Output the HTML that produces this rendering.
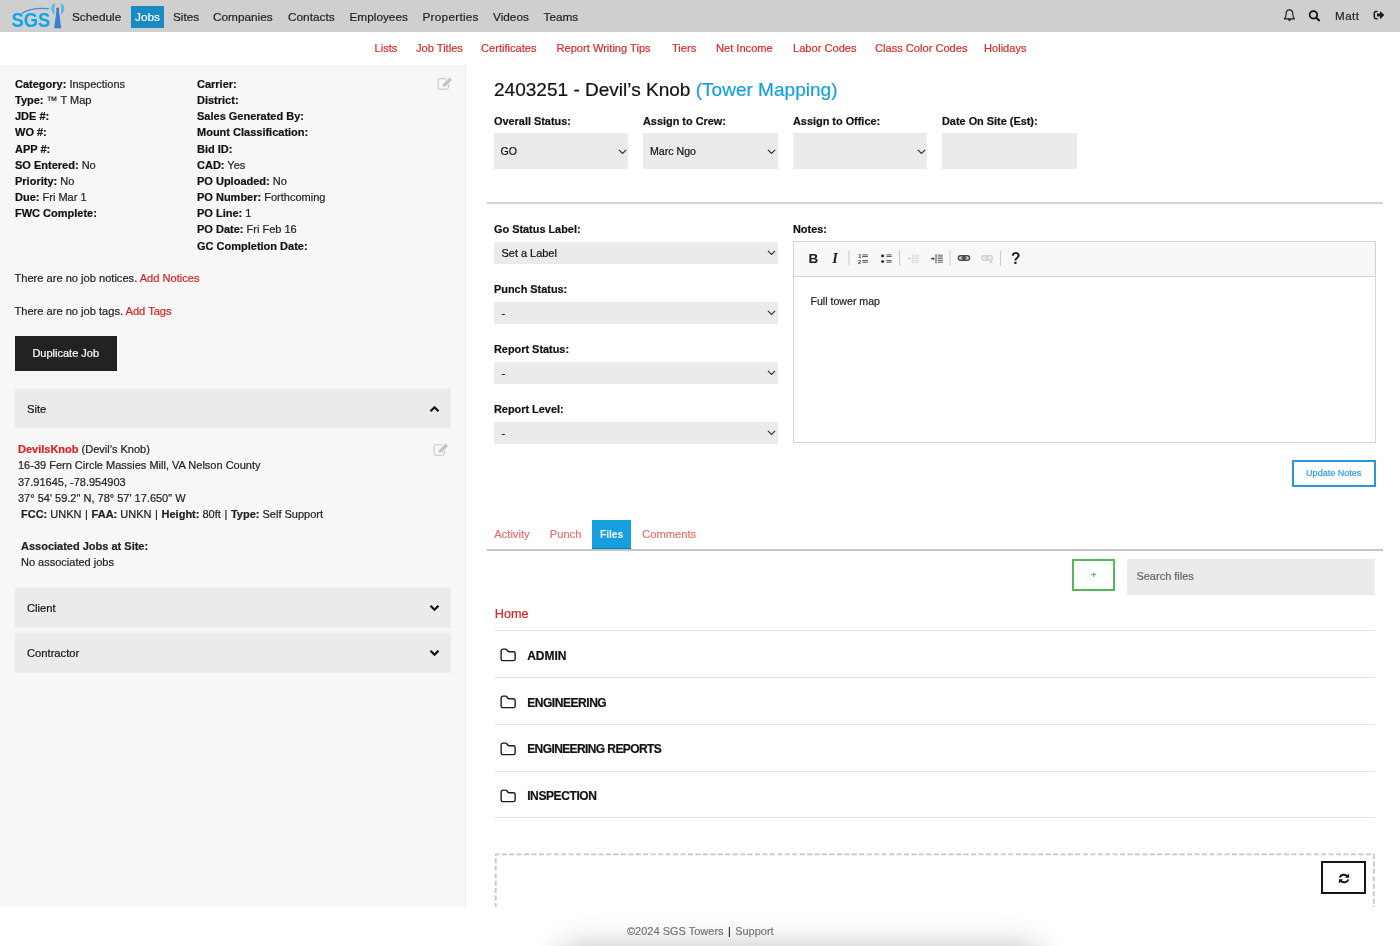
<!DOCTYPE html>
<html lang="en">
<head>
<meta charset="utf-8">
<title>2403251 - Devil's Knob (Tower Mapping)</title>
<style>
*{box-sizing:border-box;}
html,body{margin:0;padding:0;}
body{width:1400px;height:946px;overflow:hidden;position:relative;background:#fff;color:#111;
  font-family:"Liberation Sans","DejaVu Sans",sans-serif;font-size:11px;line-height:16.15px;-webkit-text-stroke:0.2px;}
a{text-decoration:none;color:#de1f1f;}
b{font-weight:700;}
i{font-style:normal;padding:0 .55px;}
.abs{position:absolute;white-space:nowrap;}

/* top nav */
#nav{position:absolute;left:0;top:0;width:1400px;height:32px;background:#d0cfcf;}
#nav .it{position:absolute;top:6px;height:22px;line-height:22px;font-size:11.8px;color:#222;white-space:nowrap;}
#nav .it.on{background:#1a8bc1;color:#fff;padding:0 4px;}
#subnav{position:absolute;left:0;top:32px;width:1400px;height:33px;}
#subnav a{position:absolute;top:8px;line-height:16px;font-size:11.1px;color:#dc2a2a;white-space:nowrap;}

/* left panel */
#left{position:absolute;left:0;top:65px;width:466px;height:842px;background:#f7f7f7;border-right:1px solid #ebebeb;}
#left .col{position:absolute;top:11px;font-size:11px;line-height:16.15px;white-space:nowrap;color:#222;}
#left .col b{color:#111;}
.sec{position:absolute;left:14.5px;width:436.5px;height:41px;font-size:11.2px;line-height:42.4px;padding-left:12.5px;overflow:hidden;color:#111;
  background:linear-gradient(to bottom, rgba(235,235,235,var(--a)) 0, rgba(235,235,235,var(--a)) 1px, #ebebeb 1px, #ebebeb 40px, rgba(235,235,235,var(--b)) 40px);}
.sec svg{position:absolute;right:11.5px;top:16.5px;}

/* right */
#right{position:absolute;left:467px;top:65px;width:933px;height:842px;overflow:hidden;}
.lbl{position:absolute;font-weight:700;font-size:10.9px;line-height:16px;white-space:nowrap;color:#111;}
.sel{position:absolute;background:#ebebeb;font-size:10.6px;color:#111;white-space:nowrap;}
.sel span{position:absolute;left:7px;top:50%;transform:translateY(-50%);line-height:14px;}
.sel svg{position:absolute;right:1.5px;top:50%;margin-top:-2.5px;}
.row{position:absolute;left:27.5px;width:880.5px;height:47px;}
.row svg{position:absolute;left:5.4px;top:17.7px;}
.row b{position:absolute;left:32.7px;top:17.2px;font-size:12px;line-height:16px;color:#111;}
.tab{top:461px;font-size:11.15px;line-height:16px;color:#e8716c;}

#wrap{position:absolute;left:0;top:0;width:1400px;height:946px;will-change:transform;}
#foot{position:absolute;left:0;top:907px;width:1400px;height:39px;overflow:hidden;}
</style>
</head>
<body>
<div id="wrap">

<div id="nav">
  <svg class="abs" style="left:0;top:0" width="70" height="32" viewBox="0 0 70 32">
    <path d="M20.5 14.2 C27 9.6 37 7.6 48.5 8.6" fill="none" stroke="#3f8fe0" stroke-width="1.2" stroke-linecap="round"/>
    <text x="11.4" y="27.3" font-family="Liberation Sans, sans-serif" font-weight="700" font-size="20.6" fill="#9fe3f6" stroke="#9fe3f6" stroke-width="0.9" stroke-linejoin="round" textLength="38.8" lengthAdjust="spacingAndGlyphs">SGS</text>
    <text x="11.4" y="27.3" font-family="Liberation Sans, sans-serif" font-weight="700" font-size="20.6" fill="#1e9fdc" textLength="38.8" lengthAdjust="spacingAndGlyphs">SGS</text>
    <path d="M56.7 9 L58.7 9 L61.2 28.2 L54.1 28.2 Z" fill="#3a7fd6"/>
    <path d="M54.4 3.8 C51 6.4 51 10.6 54 13.6 C53.7 10.4 53.7 7 54.4 3.8 Z" fill="#4bbdee" stroke="#4bbdee" stroke-width="1.1" stroke-linejoin="round"/>
    <path d="M61.2 3.8 C64.6 6.4 64.6 10.6 61.6 13.6 C61.9 10.4 61.9 7 61.2 3.8 Z" fill="#4bbdee" stroke="#4bbdee" stroke-width="1.1" stroke-linejoin="round"/>
    <circle cx="57.7" cy="9" r="1.4" fill="#a8465e"/>
  </svg>
  <span class="it" style="left:72px">Schedule</span>
  <span class="it on" style="left:131px">Jobs</span>
  <span class="it" style="left:173px">Sites</span>
  <span class="it" style="left:213px">Companies</span>
  <span class="it" style="left:288px">Contacts</span>
  <span class="it" style="left:349.5px">Employees</span>
  <span class="it" style="left:422.5px;letter-spacing:.25px">Properties</span>
  <span class="it" style="left:493px">Videos</span>
  <span class="it" style="left:543.5px">Teams</span>
  <!-- bell / search / signout : coordinates are page coords minus (1275,0) -->
  <svg class="abs" style="left:1275px;top:0" width="120" height="32" viewBox="0 0 120 32">
    <path d="M14.45 9.9 C12 9.9 11.1 11.9 11.1 14 C11.1 16.4 10.4 17.8 9.4 18.8 L19.5 18.8 C18.5 17.8 17.8 16.4 17.8 14 C17.8 11.9 16.9 9.9 14.45 9.9 Z" fill="none" stroke="#1c1c1c" stroke-width="1.15" stroke-linejoin="round"/>
    <path d="M13.1 19.6 C13.3 21 15.6 21 15.8 19.6 Z" fill="#1c1c1c" stroke="#1c1c1c" stroke-width="0.6"/>
    <circle cx="38.4" cy="14.8" r="3.75" fill="none" stroke="#111" stroke-width="1.8"/>
    <path d="M41.3 17.7 L44.2 20.4" stroke="#111" stroke-width="2" stroke-linecap="round"/>
    <path d="M102.6 11.5 H101 C100 11.5 99.3 12.2 99.3 13.2 V17 C99.3 18 100 18.7 101 18.7 H102.6" fill="none" stroke="#1c1c1c" stroke-width="1.5"/>
    <path d="M102 13.6 H105 V11 L109.4 15.1 L105 19.2 V16.6 H102 Z" fill="#1c1c1c"/>
  </svg>
  <span class="it" style="left:1335px;top:5px;font-size:11.6px;letter-spacing:.5px">Matt</span>
</div>

<div id="subnav">
  <a style="left:374.5px">Lists</a>
  <a style="left:416px">Job Titles</a>
  <a style="left:481px">Certificates</a>
  <a style="left:556.5px">Report Writing Tips</a>
  <a style="left:672px">Tiers</a>
  <a style="left:716px">Net Income</a>
  <a style="left:793px">Labor Codes</a>
  <a style="left:875px">Class Color Codes</a>
  <a style="left:984px">Holidays</a>
</div>

<div id="left">
  <div class="col" style="left:15px">
    <b>Category:</b> Inspections<br>
    <b>Type:</b> ™ T Map<br>
    <b>JDE #:</b><br>
    <b>WO #:</b><br>
    <b>APP #:</b><br>
    <b>SO Entered:</b> No<br>
    <b>Priority:</b> No<br>
    <b>Due:</b> Fri Mar 1<br>
    <b>FWC Complete:</b>
  </div>
  <div class="col" style="left:197px">
    <b>Carrier:</b><br>
    <b>District:</b><br>
    <b>Sales Generated By:</b><br>
    <b>Mount Classification:</b><br>
    <b>Bid ID:</b><br>
    <b>CAD:</b> Yes<br>
    <b>PO Uploaded:</b> No<br>
    <b>PO Number:</b> Forthcoming<br>
    <b>PO Line:</b> 1<br>
    <b>PO Date:</b> Fri Feb 16<br>
    <b>GC Completion Date:</b>
  </div>
  <!-- edit icon -->
  <svg class="abs" style="left:436.5px;top:11px" width="17" height="15" viewBox="0 0 17 15">
    <path d="M11.4 8.6 V11.3 C11.4 12.4 10.6 13.2 9.5 13.2 H3 C1.9 13.2 1.1 12.4 1.1 11.3 V4.6 C1.1 3.5 1.9 2.7 3 2.7 H9.2" fill="none" stroke="#c3c3c3" stroke-width="1.1"/>
    <path d="M5.6 10.6 L6 8.2 L12.6 1.6 L15 4 L8.4 10.6 Z" fill="#c3c3c3"/>
  </svg>

  <div class="abs" style="left:14.5px;top:205px;font-size:11.1px;color:#222;">There are no job notices. <a>Add Notices</a></div>
  <div class="abs" style="left:14.5px;top:237.5px;font-size:11.1px;color:#222;">There are no job tags. <a>Add Tags</a></div>

  <div class="abs" style="left:14.5px;top:270.5px;width:102.5px;height:35.5px;background:#222;color:#fff;font-size:11px;line-height:35.5px;text-align:center;">Duplicate Job</div>

  <div class="sec" style="top:323px;--a:.5;--b:.4">Site
    <svg width="11" height="8" viewBox="0 0 11 8"><path d="M1.5 6.3 L5.5 2.3 L9.5 6.3" fill="none" stroke="#111" stroke-width="2.3"/></svg>
  </div>

  <div class="abs" style="left:18px;top:376.3px;font-size:11px;line-height:16.15px;color:#222;">
    <a><b>DevilsKnob</b></a> (Devil’s Knob)<br>
    16-39 Fern Circle Massies Mill, VA Nelson County<br>
    37.91645, -78.954903<br>
    37° 54' 59.2" N, 78° 57' 17.650" W<br>
    <span style="margin-left:3px"><b>FCC:</b> UNKN <i>|</i> <b>FAA:</b> UNKN <i>|</i> <b>Height:</b> 80ft <i>|</i> <b>Type:</b> Self Support</span><br>
    <br>
    <span style="margin-left:3px"><b>Associated Jobs at Site:</b></span><br>
    <span style="margin-left:3px">No associated jobs</span>
  </div>
  <svg class="abs" style="left:432.8px;top:376.5px" width="17" height="15" viewBox="0 0 17 15">
    <path d="M11.4 8.6 V11.3 C11.4 12.4 10.6 13.2 9.5 13.2 H3 C1.9 13.2 1.1 12.4 1.1 11.3 V4.6 C1.1 3.5 1.9 2.7 3 2.7 H9.2" fill="none" stroke="#c3c3c3" stroke-width="1.1"/>
    <path d="M5.6 10.6 L6 8.2 L12.6 1.6 L15 4 L8.4 10.6 Z" fill="#c3c3c3"/>
  </svg>

  <div class="sec" style="top:522px;--a:.6;--b:.7">Client
    <svg width="11" height="8" viewBox="0 0 11 8"><path d="M1.5 1.7 L5.5 5.7 L9.5 1.7" fill="none" stroke="#111" stroke-width="2.3"/></svg>
  </div>
  <div class="sec" style="top:567px;--a:.2;--b:.7">Contractor
    <svg width="11" height="8" viewBox="0 0 11 8"><path d="M1.5 1.7 L5.5 5.7 L9.5 1.7" fill="none" stroke="#111" stroke-width="2.3"/></svg>
  </div>
</div>

<div id="right">
  <div class="abs" style="left:27px;top:12px;font-size:19.05px;line-height:26px;color:#111;">2403251 - Devil’s Knob <span style="color:#169fdf">(Tower Mapping)</span></div>

  <div class="lbl" style="left:27px;top:47.5px">Overall Status:</div>
  <div class="lbl" style="left:176px;top:47.5px">Assign to Crew:</div>
  <div class="lbl" style="left:326px;top:47.5px">Assign to Office:</div>
  <div class="lbl" style="left:475px;top:47.5px">Date On Site (Est):</div>

  <div class="sel" style="left:26.5px;top:68px;width:134.5px;height:36px"><span>GO</span><svg width="9" height="6" viewBox="0 0 9 6"><path d="M0.9 0.9 L4.5 4.5 L8.1 0.9" fill="none" stroke="#333" stroke-width="1.2"/></svg></div>
  <div class="sel" style="left:176px;top:68px;width:134.5px;height:36px"><span>Marc Ngo</span><svg width="9" height="6" viewBox="0 0 9 6"><path d="M0.9 0.9 L4.5 4.5 L8.1 0.9" fill="none" stroke="#333" stroke-width="1.2"/></svg></div>
  <div class="sel" style="left:325.5px;top:68px;width:134.5px;height:36px"><svg width="9" height="6" viewBox="0 0 9 6"><path d="M0.9 0.9 L4.5 4.5 L8.1 0.9" fill="none" stroke="#333" stroke-width="1.2"/></svg></div>
  <div class="sel" style="left:475px;top:68px;width:135px;height:36px"></div>

  <div class="abs" style="left:19.5px;top:137px;width:896px;height:2px;background:#d4d4d4;"></div>

  <div class="lbl" style="left:27px;top:156px">Go Status Label:</div>
  <div class="sel" style="left:26.5px;top:176.5px;width:284px;height:22.5px"><span style="left:8px;font-size:10.95px">Set a Label</span><svg width="9" height="6" viewBox="0 0 9 6"><path d="M0.9 0.9 L4.5 4.5 L8.1 0.9" fill="none" stroke="#333" stroke-width="1.2"/></svg></div>
  <div class="lbl" style="left:27px;top:216px">Punch Status:</div>
  <div class="sel" style="left:26.5px;top:236.5px;width:284px;height:22.5px"><span style="left:8px;font-size:10.95px">-</span><svg width="9" height="6" viewBox="0 0 9 6"><path d="M0.9 0.9 L4.5 4.5 L8.1 0.9" fill="none" stroke="#333" stroke-width="1.2"/></svg></div>
  <div class="lbl" style="left:27px;top:276px">Report Status:</div>
  <div class="sel" style="left:26.5px;top:296.5px;width:284px;height:22.5px"><span style="left:8px;font-size:10.95px">-</span><svg width="9" height="6" viewBox="0 0 9 6"><path d="M0.9 0.9 L4.5 4.5 L8.1 0.9" fill="none" stroke="#333" stroke-width="1.2"/></svg></div>
  <div class="lbl" style="left:27px;top:336px">Report Level:</div>
  <div class="sel" style="left:26.5px;top:356.5px;width:284px;height:22.5px"><span style="left:8px;font-size:10.95px">-</span><svg width="9" height="6" viewBox="0 0 9 6"><path d="M0.9 0.9 L4.5 4.5 L8.1 0.9" fill="none" stroke="#333" stroke-width="1.2"/></svg></div>

  <div class="lbl" style="left:326px;top:156px">Notes:</div>
  <div class="abs" style="left:325.5px;top:176px;width:583px;height:201.5px;border:1px solid #d4d4d4;background:#fff;">
    <div id="tb" style="position:absolute;left:0;top:0;width:581px;height:34.5px;background:#f8f8f8;border-bottom:1px solid #d4d4d4;">
      <svg style="position:absolute;left:0;top:0" width="581" height="34" viewBox="0 0 581 34">
        <text x="14.6" y="21.2" font-family="Liberation Sans, sans-serif" font-weight="700" font-size="13.6" fill="#1d1d1d">B</text>
        <text x="38.3" y="21.2" font-family="Liberation Serif, serif" font-weight="700" font-style="italic" font-size="14.4" fill="#1d1d1d">I</text>
        <g stroke="#c6c6c6" stroke-width="1">
          <path d="M55 8.5 V23.6 M105.5 8.5 V23.6 M156 8.5 V23.6 M206.6 8.5 V23.6"/>
        </g>
        <!-- numbered list -->
        <g fill="#3a3a3a" font-family="Liberation Sans, sans-serif" font-weight="700" font-size="5.6">
          <text x="64.2" y="16.1">1</text>
          <text x="64" y="22">2</text>
        </g>
        <g stroke="#505050" stroke-width="0.95">
          <path d="M68.3 12.9 H73.9 M68.3 14.5 H73.9 M68.3 18.6 H73.9 M68.3 20.2 H73.9"/>
          <path d="M92.4 12.9 H97.6 M92.4 14.5 H97.6 M92.4 18.6 H97.6 M92.4 20.2 H97.6"/>
        </g>
        <circle cx="88.6" cy="13.9" r="1.45" fill="#1d1d1d"/>
        <circle cx="88.6" cy="19.6" r="1.45" fill="#1d1d1d"/>
        <!-- outdent (disabled) -->
        <g stroke="#d2d2d2" stroke-width="1" fill="none">
          <path d="M118.8 12.2 V21.3"/>
          <path d="M120.4 13.2 H125.1 M120.4 14.9 H125.1 M120.4 16.7 H125.1 M120.4 18.5 H125.1 M120.4 20.3 H125.1" stroke-width="0.8"/>
          <path d="M114 16.7 H117.6"/>
        </g>
        <path d="M113.3 16.7 L115.4 15 V18.4 Z" fill="#d2d2d2"/>
        <!-- indent -->
        <g stroke="#4a4a4a" stroke-width="1" fill="none">
          <path d="M142 12.2 V21.3"/>
          <path d="M143.7 13.2 H148.8 M143.7 14.9 H148.8 M143.7 16.7 H148.8 M143.7 18.5 H148.8 M143.7 20.3 H148.8" stroke-width="0.85"/>
          <path d="M136.8 16.7 H139.6" stroke-width="1.2"/>
        </g>
        <path d="M140.9 16.7 L138.7 14.9 V18.5 Z" fill="#4a4a4a"/>
        <!-- link -->
        <g stroke="#454545" stroke-width="1.5" fill="none">
          <rect x="164.4" y="13.8" width="6.6" height="4.5" rx="2.25"/>
          <rect x="168.9" y="13.8" width="6.6" height="4.5" rx="2.25"/>
        </g>
        <path d="M166.6 16.05 H173.3" stroke="#454545" stroke-width="1.1"/>
        <!-- unlink (disabled) -->
        <g stroke="#cfcfcf" stroke-width="1.4" fill="none">
          <rect x="188" y="13.8" width="6.2" height="4.3" rx="2.15"/>
          <rect x="192" y="13.8" width="6.2" height="4.3" rx="2.15"/>
          <path d="M195.4 18.4 L198.6 21.6 M198.6 18.4 L195.4 21.6" stroke-width="1"/>
        </g>
        <text x="217" y="22.3" font-family="Liberation Sans, sans-serif" font-weight="700" font-size="15.6" fill="#1d1d1d">?</text>
      </svg>
    </div>
    <div class="abs" style="left:17px;top:52px;font-size:10.6px;line-height:14px;color:#222;">Full tower map</div>
  </div>

  <div class="abs" style="left:825px;top:395px;width:83.5px;height:27px;border:2px solid #2a97d9;color:#2c9fe0;font-size:9.05px;line-height:23.4px;text-align:center;">Update Notes</div>

  <!-- tabs -->
  <div class="abs tab" style="left:27.3px;">Activity</div>
  <div class="abs tab" style="left:82.8px;">Punch</div>
  <div class="abs" style="left:125.4px;top:455.2px;width:38.4px;height:29.3px;background:#179fe0;color:#fff;font-size:10.3px;font-weight:700;letter-spacing:-.1px;line-height:29.6px;-webkit-text-stroke:0;text-align:center;border-bottom:1px solid #0d7bb6;">Files</div>
  <div class="abs tab" style="left:175.3px;">Comments</div>
  <div class="abs" style="left:19.5px;top:484px;width:896px;height:2px;background:#c6c6c6;"></div>

  <div class="abs" style="left:605.2px;top:494px;width:43.2px;height:31.8px;border:2px solid #52bb57;color:#3aa640;font-size:9.5px;line-height:27px;text-align:center;">+</div>
  <div class="abs" style="left:659.8px;top:494px;width:248.2px;height:35.8px;background:#ebebeb;color:#666;font-size:11px;line-height:35px;padding-left:9.6px;">Search files</div>

  <div class="abs" style="left:27.8px;top:539.7px;font-size:12.7px;line-height:18px;color:#e0211d;">Home</div>
  <div class="abs" style="left:27.5px;top:565px;width:880.5px;height:1px;background:#e2e2e2;"></div>
  <div class="abs" style="left:27.5px;top:612px;width:880.5px;height:1px;background:#e2e2e2;"></div>
  <div class="abs" style="left:27.5px;top:659px;width:880.5px;height:1px;background:#e2e2e2;"></div>
  <div class="abs" style="left:27.5px;top:706px;width:880.5px;height:1px;background:#e2e2e2;"></div>
  <div class="abs" style="left:27.5px;top:752px;width:880.5px;height:1px;background:#e2e2e2;"></div>

  <div class="row" style="top:565.6px"><svg width="17" height="15" viewBox="0 0 17 15"><path d="M1.15 2.9 C1.15 1.9 1.9 1.15 2.9 1.15 H5.4 C6.1 1.15 6.6 1.45 7 2 L7.7 3 C8 3.45 8.5 3.7 9.1 3.7 H13.4 C14.4 3.7 15.15 4.45 15.15 5.45 V10.9 C15.15 11.9 14.4 12.65 13.4 12.65 H2.9 C1.9 12.65 1.15 11.9 1.15 10.9 Z" fill="none" stroke="#1d1d1d" stroke-width="1.4" stroke-linejoin="round"/></svg><b style="letter-spacing:0px">ADMIN</b></div>
  <div class="row" style="top:612.6px"><svg width="17" height="15" viewBox="0 0 17 15"><path d="M1.15 2.9 C1.15 1.9 1.9 1.15 2.9 1.15 H5.4 C6.1 1.15 6.6 1.45 7 2 L7.7 3 C8 3.45 8.5 3.7 9.1 3.7 H13.4 C14.4 3.7 15.15 4.45 15.15 5.45 V10.9 C15.15 11.9 14.4 12.65 13.4 12.65 H2.9 C1.9 12.65 1.15 11.9 1.15 10.9 Z" fill="none" stroke="#1d1d1d" stroke-width="1.4" stroke-linejoin="round"/></svg><b style="letter-spacing:-0.45px">ENGINEERING</b></div>
  <div class="row" style="top:659.2px"><svg width="17" height="15" viewBox="0 0 17 15"><path d="M1.15 2.9 C1.15 1.9 1.9 1.15 2.9 1.15 H5.4 C6.1 1.15 6.6 1.45 7 2 L7.7 3 C8 3.45 8.5 3.7 9.1 3.7 H13.4 C14.4 3.7 15.15 4.45 15.15 5.45 V10.9 C15.15 11.9 14.4 12.65 13.4 12.65 H2.9 C1.9 12.65 1.15 11.9 1.15 10.9 Z" fill="none" stroke="#1d1d1d" stroke-width="1.4" stroke-linejoin="round"/></svg><b style="letter-spacing:-0.6px">ENGINEERING REPORTS</b></div>
  <div class="row" style="top:706.2px"><svg width="17" height="15" viewBox="0 0 17 15"><path d="M1.15 2.9 C1.15 1.9 1.9 1.15 2.9 1.15 H5.4 C6.1 1.15 6.6 1.45 7 2 L7.7 3 C8 3.45 8.5 3.7 9.1 3.7 H13.4 C14.4 3.7 15.15 4.45 15.15 5.45 V10.9 C15.15 11.9 14.4 12.65 13.4 12.65 H2.9 C1.9 12.65 1.15 11.9 1.15 10.9 Z" fill="none" stroke="#1d1d1d" stroke-width="1.4" stroke-linejoin="round"/></svg><b style="letter-spacing:-0.4px">INSPECTION</b></div>

  <svg class="abs" style="left:27px;top:787px" width="883" height="56" viewBox="0 0 883 56">
    <path d="M1.7 56 V2.4 H879.8 V56" fill="none" stroke="#c8c8c8" stroke-width="1.9" stroke-dasharray="5 2.45"/>
  </svg>
  <div class="abs" style="left:854px;top:796.4px;width:45.3px;height:32.6px;border:2px solid #161616;">
    <svg style="position:absolute;left:14.2px;top:8.5px" width="14" height="13" viewBox="0 0 14 13">
      <path d="M2.7 5.5 A4.3 3.9 0 0 1 10.3 4.3" fill="none" stroke="#111" stroke-width="2"/>
      <path d="M11.3 7.5 A4.3 3.9 0 0 1 3.7 8.7" fill="none" stroke="#111" stroke-width="2"/>
      <path d="M12.1 1.6 V5.7 H8 Z" fill="#111"/>
      <path d="M1.9 11.4 V7.3 H6 Z" fill="#111"/>
    </svg>
  </div>
</div>

<div id="foot">
  <div class="abs" style="left:627px;top:16px;font-size:11px;line-height:16px;color:#7a7a7a;">©2024 SGS Towers <span style="color:#222;padding:0 1.3px">|</span> Support</div>
  <div style="position:absolute;left:566px;top:48px;width:468px;height:30px;border-radius:12px;box-shadow:0 0 32px 8px rgba(0,0,0,.26);"></div>
</div>

</div>
</body>
</html>
